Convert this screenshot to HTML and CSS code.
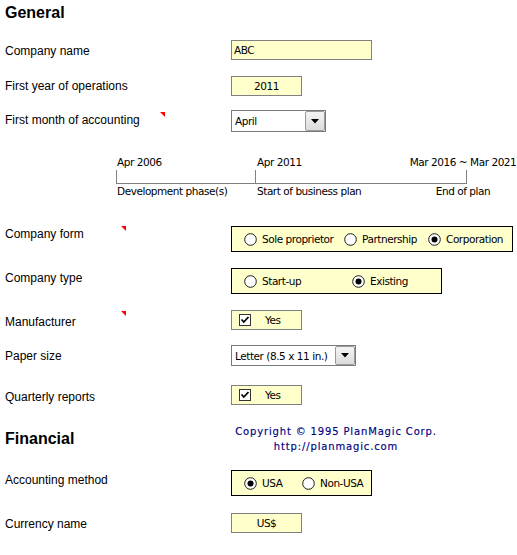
FILE: index.html
```html
<!DOCTYPE html>
<html>
<head>
<meta charset="utf-8">
<link rel="stylesheet" href="styles.css">
</head>
<body>
<div class="page">
  <h1 class="heading">General</h1>

  <div class="row r-name">
    <div class="label">Company name</div>
    <div class="field ctl f-wide">ABC</div>
  </div>

  <div class="row r-year">
    <div class="label">First year of operations</div>
    <div class="field ctl f-short f-center">2011</div>
  </div>

  <div class="row r-month">
    <div class="label">First month of accounting</div>
    <span class="marker m-month"></span>
    <div class="select ctl s-month">
      <span class="select-text">April</span>
      <span class="select-btn"><svg width="8" height="5" viewBox="0 0 8 5"><path d="M0 0H8L4 4.5Z" fill="#000"/></svg></span>
    </div>
  </div>

  <div class="timeline ctl">
    <div class="tl-row">
      <div class="tl-seg1 tl-pad1">Apr 2006</div>
      <div class="tl-seg2 tl-pad2">Apr 2011</div>
      <div class="tl-end"><span class="tl-end-text">Mar 2016 ~ Mar 2021</span></div>
    </div>
    <div class="tl-row tl-ticks">
      <div class="tl-seg1 tick tick-first"></div>
      <div class="tl-seg2 tick tick-last"></div>
    </div>
    <div class="tl-row">
      <div class="tl-seg1 tl-pad1">Development phase(s)</div>
      <div class="tl-seg2 tl-pad2">Start of business plan</div>
      <div class="tl-end"><span class="tl-end-text">End of plan</span></div>
    </div>
  </div>

  <div class="row r-form">
    <div class="label">Company form</div>
    <span class="marker m-form"></span>
    <div class="group ctl g-form">
      <span class="opt o-sole"><svg class="radio" width="13" height="13" viewBox="0 0 13 13"><circle cx="6.5" cy="6.5" r="5.8" fill="#fff" stroke="#1a1a1a" stroke-width="1"/></svg>Sole proprietor</span>
      <span class="opt o-part"><svg class="radio" width="13" height="13" viewBox="0 0 13 13"><circle cx="6.5" cy="6.5" r="5.8" fill="#fff" stroke="#1a1a1a" stroke-width="1"/></svg>Partnership</span>
      <span class="opt"><svg class="radio" width="13" height="13" viewBox="0 0 13 13"><circle cx="6.5" cy="6.5" r="5.8" fill="#fff" stroke="#1a1a1a" stroke-width="1"/><circle cx="6.5" cy="6.5" r="3" fill="#000"/></svg>Corporation</span>
    </div>
  </div>

  <div class="row r-type">
    <div class="label">Company type</div>
    <div class="group ctl g-type">
      <span class="opt o-start"><svg class="radio" width="13" height="13" viewBox="0 0 13 13"><circle cx="6.5" cy="6.5" r="5.8" fill="#fff" stroke="#1a1a1a" stroke-width="1"/></svg>Start-up</span>
      <span class="opt"><svg class="radio" width="13" height="13" viewBox="0 0 13 13"><circle cx="6.5" cy="6.5" r="5.8" fill="#fff" stroke="#1a1a1a" stroke-width="1"/><circle cx="6.5" cy="6.5" r="3" fill="#000"/></svg>Existing</span>
    </div>
  </div>

  <div class="row r-manu">
    <div class="label">Manufacturer</div>
    <span class="marker m-manu"></span>
    <div class="field ctl f-short f-check">
      <svg class="check" width="12" height="12" viewBox="0 0 12 12"><rect x="0.5" y="0.5" width="11" height="11" fill="#fff" stroke="#333"/><path d="M2.5 5.5L4.8 8L9.5 3" fill="none" stroke="#000" stroke-width="1.8"/></svg>
      <span>Yes</span>
    </div>
  </div>

  <div class="row r-paper">
    <div class="label">Paper size</div>
    <div class="select ctl s-paper">
      <span class="select-text">Letter (8.5 x 11 in.)</span>
      <span class="select-btn"><svg width="8" height="5" viewBox="0 0 8 5"><path d="M0 0H8L4 4.5Z" fill="#000"/></svg></span>
    </div>
  </div>

  <div class="row r-quart">
    <div class="label">Quarterly reports</div>
    <div class="field ctl f-short f-check">
      <svg class="check" width="12" height="12" viewBox="0 0 12 12"><rect x="0.5" y="0.5" width="11" height="11" fill="#fff" stroke="#333"/><path d="M2.5 5.5L4.8 8L9.5 3" fill="none" stroke="#000" stroke-width="1.8"/></svg>
      <span>Yes</span>
    </div>
  </div>

  <div class="row r-fin">
    <div class="label"><h2 class="heading heading-fin">Financial</h2></div>
    <div class="copyright">Copyright © 1995 PlanMagic Corp.<br>http://planmagic.com</div>
  </div>

  <div class="row r-acct">
    <div class="label">Accounting method</div>
    <div class="group ctl g-acct">
      <span class="opt o-usa"><svg class="radio" width="13" height="13" viewBox="0 0 13 13"><circle cx="6.5" cy="6.5" r="5.8" fill="#fff" stroke="#1a1a1a" stroke-width="1"/><circle cx="6.5" cy="6.5" r="3" fill="#000"/></svg>USA</span>
      <span class="opt"><svg class="radio" width="13" height="13" viewBox="0 0 13 13"><circle cx="6.5" cy="6.5" r="5.8" fill="#fff" stroke="#1a1a1a" stroke-width="1"/></svg>Non-USA</span>
    </div>
  </div>

  <div class="row r-cur">
    <div class="label">Currency name</div>
    <div class="field ctl f-short f-center">US$</div>
  </div>
</div>
</body>
</html>
```

FILE: styles.css
```css
* { box-sizing: border-box; }
body {
  margin: 0;
  background: #fff;
  color: #000;
  font-family: "Liberation Sans", Arial, sans-serif;
  font-size: 12px;
}
.page { padding: 4px 0 0 5px; }
.heading {
  margin: 0;
  font-size: 16px;
  font-weight: bold;
  line-height: 18px;
}
.heading-fin { margin-top: 8px; }

.row { display: flex; position: relative; }
.label {
  width: 226px;
  flex: none;
  line-height: 14px;
  margin-top: 3px;
}
.ctl {
  font-family: "DejaVu Sans", sans-serif;
  font-size: 10.5px;
  letter-spacing: -0.45px;
}

/* row placements */
.r-name { margin-top: 18px; height: 20px; }
.r-name .label { margin-top: 4px; }
.r-year { margin-top: 16px; height: 20px; }
.r-month { margin-top: 14px; height: 22px; }
.r-form { margin-top: 28px; height: 26px; }
.r-form .label { margin-top: 1px; }
.r-type { margin-top: 16px; height: 26px; }
.r-manu { margin-top: 16px; height: 20px; }
.r-manu .label { margin-top: 5px; }
.r-paper { margin-top: 15px; height: 21px; }
.r-paper .label { margin-top: 4px; }
.r-quart { margin-top: 19px; height: 20px; }
.r-quart .label { margin-top: 5px; }
.r-fin { margin-top: 17px; height: 30px; }
.r-fin .label { margin-top: 0; }
.r-acct { margin-top: 18px; height: 26px; }
.r-acct .label { margin-top: 3px; }
.r-cur { margin-top: 17px; height: 20px; }
.r-cur .label { margin-top: 4px; }

/* comment markers */
.marker {
  position: absolute;
  width: 0;
  height: 0;
  border-top: 5px solid #ff0000;
  border-left: 5px solid transparent;
}
.m-month { left: 155px; top: 2px; }
.m-form { left: 116px; top: 0; }
.m-manu { left: 116px; top: 1px; }

/* text fields */
.field {
  height: 20px;
  border: 1px solid #808080;
  background: #ffffcc;
  display: flex;
  align-items: center;
  padding-left: 2px;
}
.f-wide { width: 141px; }
.f-short { width: 71px; }
.f-center { justify-content: center; padding-left: 0; }
.f-check { padding-left: 7px; }
.check { margin-right: 14px; flex: none; }

/* selects */
.select {
  height: 22px;
  border: 1px solid #7a7a7a;
  background: #fff;
  display: flex;
  align-items: stretch;
}
.s-month { width: 95px; }
.s-paper { width: 125px; height: 21px; }
.select-text {
  flex: 1;
  display: flex;
  align-items: center;
  padding-left: 3px;
  white-space: nowrap;
  overflow: hidden;
}
.select-btn {
  width: 20px;
  flex: none;
  display: flex;
  align-items: center;
  justify-content: center;
  border: 1px solid #9a9a9a;
  border-radius: 2px;
  background: linear-gradient(#f4f4f4, #dcdcdc);
}

/* timeline */
.timeline {
  margin: 24px 0 0 111px;
  line-height: 13px;
}
.tl-row { display: flex; }
.tl-seg1 { width: 139px; flex: none; }
.tl-seg2 { width: 212px; flex: none; }
.tl-pad1 { padding-left: 1px; }
.tl-pad2 { padding-left: 2px; }
.tl-end {
  width: 0;
  flex: none;
  display: flex;
  justify-content: center;
  white-space: nowrap;
}
.tl-end-text { padding-right: 8px; }
.tl-ticks { margin-top: 1px; margin-bottom: 1px; }
.tick {
  height: 14px;
  border-left: 1px solid #808080;
  border-bottom: 1px solid #808080;
}
.tick-last { border-right: 1px solid #808080; }

/* radio groups */
.group {
  height: 26px;
  border: 1px solid #000;
  background: #ffffcc;
  display: flex;
  align-items: center;
  padding-left: 12px;
}
.g-form { width: 282px; }
.g-type { width: 211px; }
.g-acct { width: 141px; }
.opt { display: flex; align-items: center; white-space: nowrap; }
.radio { margin-right: 5px; flex: none; }
.o-sole { width: 100px; }
.o-part { width: 84px; }
.o-start { width: 108px; }
.o-usa { width: 58px; }

/* copyright */
.copyright {
  width: 210px;
  padding-top: 2px;
  text-align: center;
  color: #000080;
  font-family: "DejaVu Sans", sans-serif;
  font-size: 10px;
  letter-spacing: 0.85px;
  line-height: 15px;
  -webkit-text-stroke: 0.15px #000080;
}
```
